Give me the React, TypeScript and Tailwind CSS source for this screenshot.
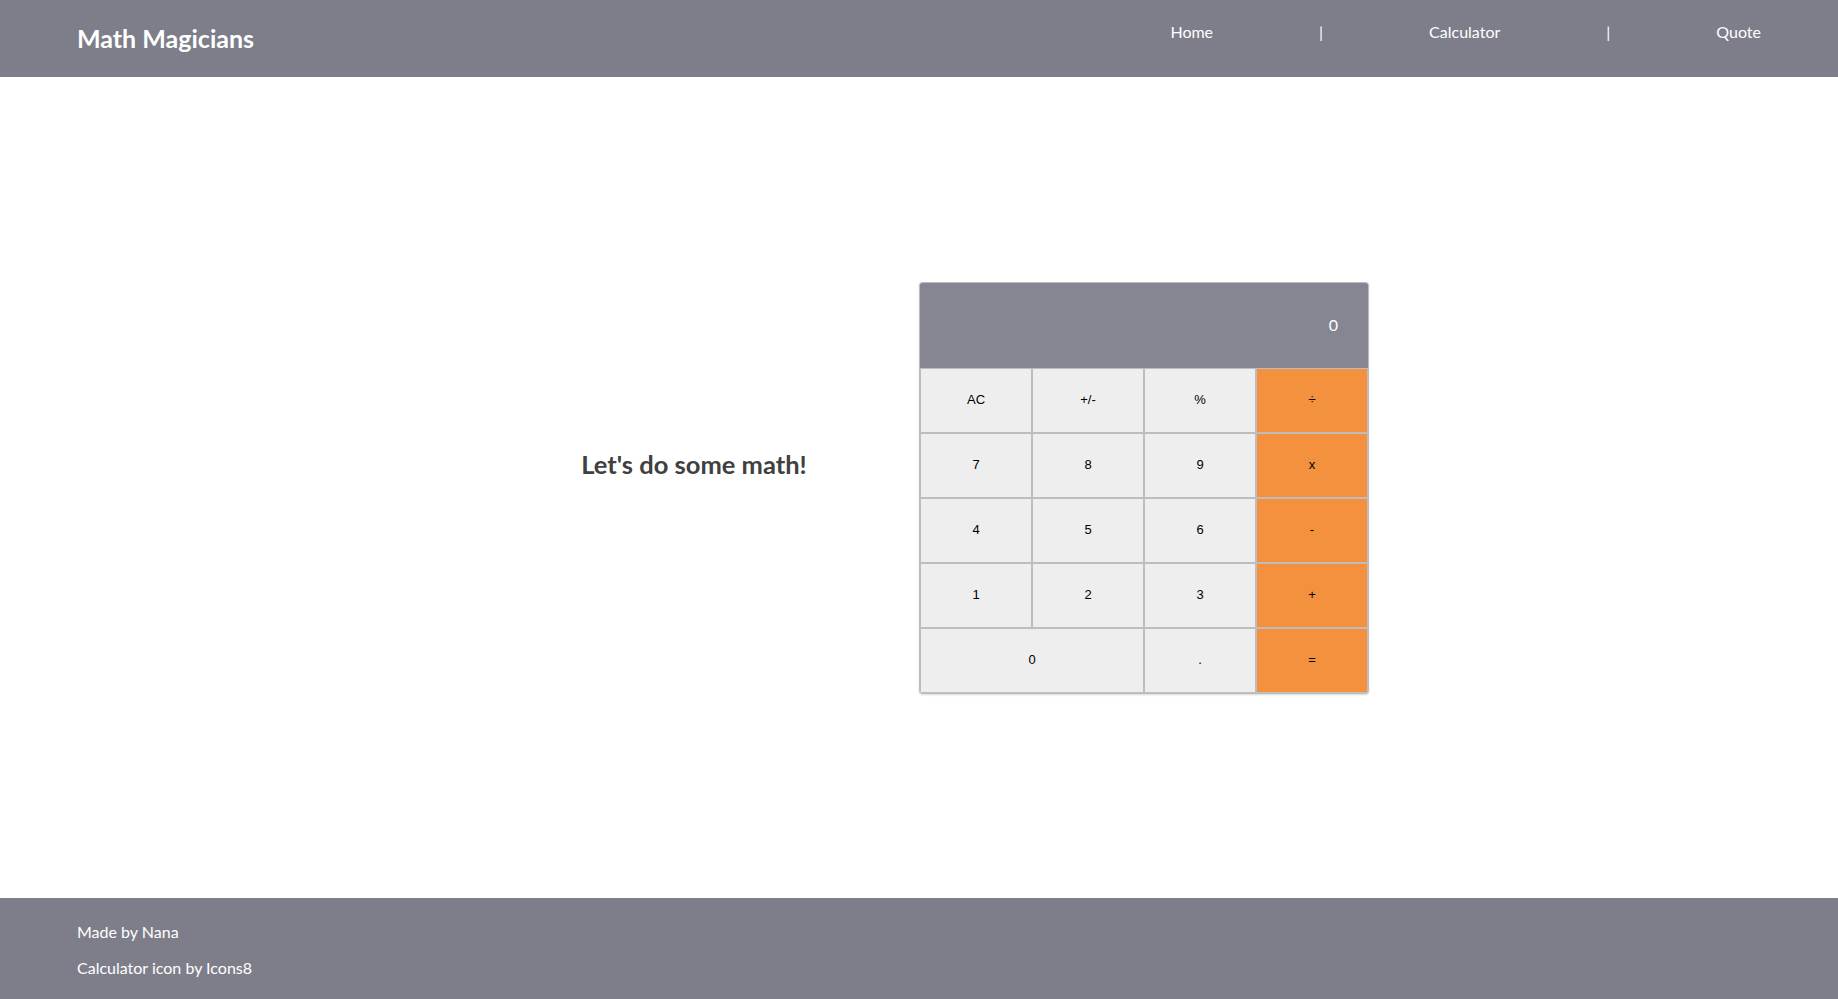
import React from 'react'

// Rows of calculator keys; op keys get the orange background.
const rows: { label: string; op?: boolean; wide?: boolean }[][] = [
  [{ label: 'AC' }, { label: '+/-' }, { label: '%' }, { label: '÷', op: true }],
  [{ label: '7' }, { label: '8' }, { label: '9' }, { label: 'x', op: true }],
  [{ label: '4' }, { label: '5' }, { label: '6' }, { label: '-', op: true }],
  [{ label: '1' }, { label: '2' }, { label: '3' }, { label: '+', op: true }],
  [{ label: '0', wide: true }, { label: '.' }, { label: '=', op: true }],
]

function Calculator() {
  return (
    <div className="w-[450px] overflow-hidden rounded-[3px] border border-[#bdbdbd] shadow-[0_1px_2px_rgba(0,0,0,0.15)]">
      <div className="flex h-[85px] items-center justify-end bg-[#858692] pr-[30px] text-[16px] text-white">
        0
      </div>
      <div className="grid grid-cols-4">
        {rows.flat().map((k, i) => (
          <button
            key={i}
            className={`h-[65px] border border-[#bdbdbd] font-['Liberation_Sans',Arial,sans-serif] text-[13px] text-black ${
              k.op ? 'bg-[#f4913e]' : 'bg-[#eeeeee]'
            } ${k.wide ? 'col-span-2' : ''}`}
          >
            {k.label}
          </button>
        ))}
      </div>
    </div>
  )
}

export default function App() {
  return (
    <div className="flex min-h-[999px] flex-col font-['Lato','Open_Sans',sans-serif]">
      <header className="flex h-[77px] items-start justify-between bg-[#7d7e8a] px-[77px] text-white">
        <h1 className="pt-[22px] text-[25px] font-bold leading-[33px]">Math Magicians</h1>
        <nav className="flex gap-[106px] pt-[20px] text-[16px] leading-[24px]">
          <a>Home</a>
          <span>|</span>
          <a>Calculator</a>
          <span>|</span>
          <a>Quote</a>
        </nav>
      </header>

      <main className="flex flex-1 items-center justify-center">
        <div className="flex w-[450px] justify-center pb-[46px]">
          <h2 className="text-[25.5px] font-bold text-[#404040]">Let's do some math!</h2>
        </div>
        <Calculator />
      </main>

      <footer className="flex h-[101px] flex-col justify-center gap-[12px] bg-[#7d7e8a] px-[77px] pt-[2px] text-[16px] leading-[24px] text-white">
        <p>Made by Nana</p>
        <p>Calculator icon by Icons8</p>
      </footer>
    </div>
  )
}
